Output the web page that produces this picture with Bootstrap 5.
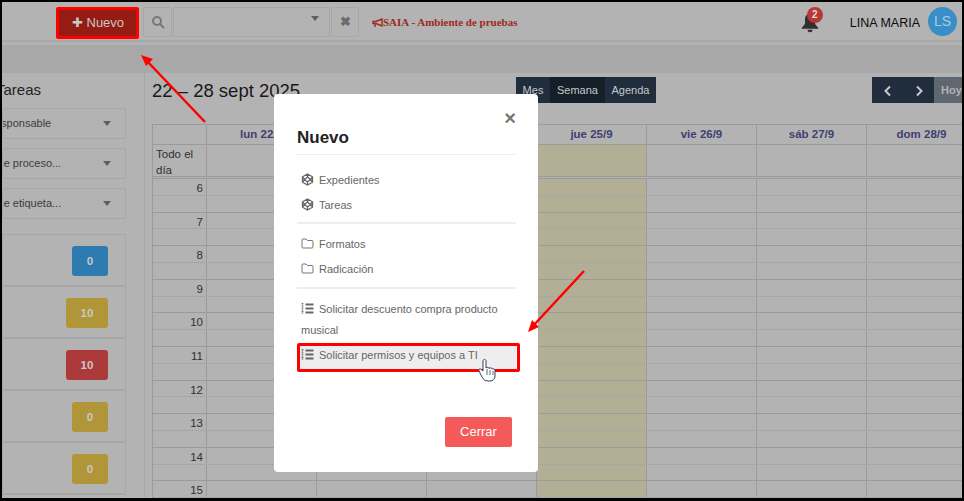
<!DOCTYPE html>
<html lang="es">
<head>
<meta charset="UTF-8">
<meta name="viewport" content="width=device-width, initial-scale=1.0">
<title>SAIA - Calendario</title>
<link href="https://cdn.jsdelivr.net/npm/bootstrap@5.3.0/dist/css/bootstrap.min.css" rel="stylesheet">
<style>
/* colores ya oscurecidos: la pagina esta detras del fondo del modal */
html, body { height: 100%; overflow: hidden; }
body { font-family: "Liberation Sans", Arial, sans-serif; font-size: 12px; color: #242424; border: solid #000; border-width: 2px 2px 3px 2px; background: #b3b3b3; }
.page { height: 100%; overflow: hidden; }

.topbar { height: 40px; margin-bottom: 3px; border-bottom: 2px solid #a8a8a8; padding-left: 56px; }
.btn-nuevo { width: 80px; height: 27px; margin-top: 7px; padding: 0; background: #941c12; color: #c8c8c8; border: 0; border-radius: 2px; font-size: 13px; }
.search-box { margin: 5px 0 0 5px; height: 30px; }
.search-cell { height: 30px; border: 1px solid #a7a7a7; border-radius: 2px; color: #6b6b6b; margin-right: 1px; }
.cell-a { width: 29px; }
.cell-b { width: 157px; padding-right: 10px; }
.cell-c { width: 28px; font-weight: 700; font-size: 13px; }
.caret-down { width: 0; height: 0; border-left: 4px solid transparent; border-right: 4px solid transparent; border-top: 5px solid #5f5f5f; }
.saia-text { margin: 0 0 0 12px; padding-top: 12px; font-family: "Liberation Serif", serif; font-weight: 700; font-size: 11px; color: #9d2a1f; }
.bell-box { width: 20px; height: 20px; margin: 11px 30px 0 0; }
.bell-num { top: -6px; right: -3px; width: 16px; height: 16px; border-radius: 50%; background: #b83636; color: #ddd; font-size: 10px; font-weight: 700; line-height: 16px; text-align: center; }
.user-name { font-size: 12.5px; color: #0c0c0c; padding-top: 12px; margin-right: 8px; }
.user-pic { width: 29px; height: 29px; margin: 5px 5px 0 0; border-radius: 50%; background: #3a8ec8; color: #a8cbe0; font-size: 14px; line-height: 29px; text-align: center; }
.subbar { height: 28px; background: #a8a8a8; }

.side-col { width: 143px; height: 430px; border-right: 1px solid #a7a7a7; overflow: hidden; flex-shrink: 0; }
.side-title { font-size: 15px; margin: 7px 0 9px -6px; line-height: 19px; white-space: nowrap; }
.sel-row { width: 124px; height: 31px; margin-bottom: 9px; border: 1px solid #a7a7a7; border-radius: 2px; padding: 0 14px 0 0; overflow: hidden; }
.sel-text { white-space: nowrap; font-size: 11px; color: #3c3c3c; }
.shift-a { margin-left: -16px; }
.shift-b { margin-left: -47px; }
.task-box { width: 124px; margin-top: 15px; border: 1px solid #a7a7a7; border-bottom: 0; }
.task-row { height: 52px; border-bottom: 2px solid #a7a7a7; padding: 11px 17px 0 0; }
.count-tag { height: 30px; border-radius: 3px; color: #c8c8c8; font-size: 11.5px; font-weight: 700; line-height: 30px; text-align: center; }
.tag-s { width: 36px; }
.tag-l { width: 42px; }
.tag-blue { background: #2e7bb2; }
.tag-yellow { background: #b09638; }
.tag-red { background: #ad3a3a; }

.cal-col { padding-left: 7px; min-width: 0; }
.cal-bar { height: 51px; padding-top: 4px; }
.cal-title { width: 364px; margin: 0; font-size: 18.5px; font-weight: 400; line-height: 28px; color: #181818; flex-shrink: 0; white-space: nowrap; }
.view-btn { height: 26px; padding: 0; border: 0; background: #1f2d3d; color: #c8c8c8; font-size: 11px; }
.view-btn.on { background: #141f2a; }
.v-mes { width: 34px; }
.v-sem { width: 55px; }
.v-age { width: 51px; }
.pager { margin-left: 216px; flex-shrink: 0; }
.pager .view-btn { width: 31px; }
.pager .view-btn.hoy { width: 40px; padding-left: 7px; background: #5f6770; color: #b3b3b3; font-weight: 700; text-align: left; }
.cal-grid { width: 825px; border: 1px solid #9b9b9b; border-right: 0; }
.g-row { display: flex; }
.g-cell { width: 110px; flex-shrink: 0; border-right: 1px solid #9b9b9b; }
.g-time { width: 54px; flex-shrink: 0; border-right: 1px solid #9b9b9b; text-align: right; padding-right: 3px; color: #303030; font-size: 11.5px; line-height: 18px; }
.g-head { height: 20px; border-bottom: 1px solid #9b9b9b; }
.g-head .g-cell { text-align: center; font-size: 11.5px; font-weight: 700; color: #403f6f; line-height: 19px; }
.g-all { height: 34px; border-bottom: 3px double #9b9b9b; }
.g-all .g-time { text-align: left; padding: 1px 0 0 3px; line-height: 16px; }
.g-slot { height: 16.8px; border-bottom: 1px dotted #9b9b9b; box-sizing: border-box; }
.g-slot.even { border-bottom: 1px solid #9b9b9b; }
.g-today { background: #b3ae96; }

.modal-dialog.nuevo-box { position: absolute; left: 274px; top: 94px; z-index: 1055; width: 264px; max-width: 264px; margin: 0; }
.nuevo-box .modal-content { background: #fff; border: 0; border-radius: 4px; padding: 0 22px 25px 23px; }
.nuevo-head { padding: 33px 0 5px; border-bottom: 1px solid #eee; }
.nuevo-head .modal-title { font-size: 17px; font-weight: 700; line-height: 22px; color: #222; }
.close-x { top: 12px; right: 20px; width: 16px; height: 24px; padding: 0; border: 0; background: none; color: #777; font-size: 20px; font-weight: 700; line-height: 24px; }
.nuevo-list { margin-top: 13px; }
.opt-item { display: block; padding: 0 4px; height: 25px; line-height: 25px; color: #666; font-size: 11px; text-decoration: none; }
.opt-item svg { width: 13px; height: 13px; margin-right: 5px; vertical-align: -2px; }
.opt-wrap { height: auto; line-height: 21px; padding-top: 10px; }
.opt-on { background: #eee; height: 28px; line-height: 22px; margin-top: 3px; }
.nuevo-rule { height: 2px; margin: 4px 0 8px; background: #eee; border: 0; opacity: 1; }
.rule-low { margin: 5px 0 0; }
.btn-cerrar { width: 67px; height: 30px; padding: 0; margin: 45px 4px 0 auto; display: block; background: #f55a5a; border: 0; border-radius: 2px; color: #fff; font-size: 13px; }

.anno { z-index: 1060; pointer-events: none; }
.anno-box { border: 3px solid #f00; border-radius: 2px; }
.anno-nuevo { left: 56px; top: 7px; width: 83px; height: 32px; }
.anno-item { left: 297px; top: 343px; width: 223px; height: 29px; }
.anno-svg { left: 0; top: 0; width: 964px; height: 501px; }
</style>
</head>
<body>
<div class="page">
    <div class="topbar d-flex">
        <button class="btn-nuevo">✚ Nuevo</button>
        <div class="search-box d-flex">
            <div class="search-cell cell-a d-flex align-items-center justify-content-center">
                <svg width="14" height="14" viewBox="0 0 14 14" fill="none" stroke="#777" stroke-width="2"><circle cx="6" cy="6" r="4"/><path d="M9 9l4 4"/></svg>
            </div>
            <div class="search-cell cell-b d-flex justify-content-end"><span class="caret-down mt-2"></span></div>
            <div class="search-cell cell-c d-flex align-items-center justify-content-center">✖</div>
        </div>
        <p class="saia-text">
            <svg width="11" height="10" viewBox="0 0 11 10" fill="none" stroke="#9d2a1f" stroke-width="1.4"><path d="M1 3.500h3L10 1v7L4 5.500H1zM3 6v3"/></svg>SAIA - Ambiente de pruebas
        </p>
        <div class="ms-auto d-flex">
            <div class="bell-box position-relative">
                <svg width="20" height="20" viewBox="0 0 22 24" fill="#303030"><path d="M11 1c-4 0-6 3-6 7v4c0 2-2 3-4 6v1h20v-1c-2-3-4-4-4-6V8c0-4-2-7-6-7z"/><path d="M8 20a3 3 0 0 0 6 0z"/></svg>
                <span class="bell-num position-absolute">2</span>
            </div>
            <div class="user-name">LINA MARIA</div>
            <div class="user-pic">LS</div>
        </div>
    </div>
    <div class="subbar"></div>
    <div class="d-flex">
        <div class="side-col">
            <div class="side-title">Tareas</div>
            <div class="sel-row d-flex align-items-center justify-content-between"><span class="sel-text shift-a">Responsable</span><span class="caret-down"></span></div>
            <div class="sel-row d-flex align-items-center justify-content-between"><span class="sel-text shift-b">Seleccione proceso...</span><span class="caret-down"></span></div>
            <div class="sel-row d-flex align-items-center justify-content-between"><span class="sel-text shift-b">Seleccione etiqueta...</span><span class="caret-down"></span></div>
            <div class="task-box">
                <div class="task-row d-flex justify-content-end"><div class="count-tag tag-s tag-blue">0</div></div>
                <div class="task-row d-flex justify-content-end"><div class="count-tag tag-l tag-yellow">10</div></div>
                <div class="task-row d-flex justify-content-end"><div class="count-tag tag-l tag-red">10</div></div>
                <div class="task-row d-flex justify-content-end"><div class="count-tag tag-s tag-yellow">0</div></div>
                <div class="task-row d-flex justify-content-end"><div class="count-tag tag-s tag-yellow">0</div></div>
            </div>
        </div>
        <div class="cal-col flex-grow-1">
            <div class="cal-bar d-flex">
                <h2 class="cal-title">22 – 28 sept 2025</h2>
                <div class="btn-group flex-shrink-0 align-self-start">
                    <button class="view-btn v-mes">Mes</button>
                    <button class="view-btn v-sem on">Semana</button>
                    <button class="view-btn v-age">Agenda</button>
                </div>
                <div class="btn-group pager align-self-start">
                    <button class="view-btn"><svg width="10" height="12" viewBox="0 0 10 12" fill="none" stroke="#c8c8c8" stroke-width="2"><path d="M7 1.500L2.500 6 7 10.500"/></svg></button>
                    <button class="view-btn"><svg width="10" height="12" viewBox="0 0 10 12" fill="none" stroke="#c8c8c8" stroke-width="2"><path d="M3 1.500L7.500 6 3 10.500"/></svg></button>
                    <button class="view-btn hoy">Hoy</button>
                </div>
            </div>
            <div class="cal-grid" id="calGrid">
                <div class="g-row g-head">
                    <div class="g-time"></div>
                    <div class="g-cell">lun 22/9</div>
                    <div class="g-cell">mar 23/9</div>
                    <div class="g-cell">mié 24/9</div>
                    <div class="g-cell">jue 25/9</div>
                    <div class="g-cell">vie 26/9</div>
                    <div class="g-cell">sáb 27/9</div>
                    <div class="g-cell">dom 28/9</div>
                </div>
                <div class="g-row g-all">
                    <div class="g-time">Todo el día</div>
                    <div class="g-cell"></div><div class="g-cell"></div><div class="g-cell"></div>
                    <div class="g-cell g-today"></div>
                    <div class="g-cell"></div><div class="g-cell"></div><div class="g-cell"></div>
                </div>
            </div>
        </div>
    </div>
</div>

<div class="modal-dialog nuevo-box">
    <div class="modal-content position-relative">
        <button class="close-x position-absolute">×</button>
        <div class="nuevo-head"><h5 class="modal-title">Nuevo</h5></div>
        <div class="nuevo-list">
            <a class="opt-item" href="#"><svg viewBox="0 0 13 13" fill="none" stroke="#666" stroke-width="1.300"><path d="M6.500 1L11.500 3.800v5.400L6.500 12l-5-2.800V3.800zM6.500 4L9.500 6.500 6.500 9 3.500 6.500zM1.500 3.800L3.500 6.500 1.500 9.200M11.500 3.800L9.500 6.500 11.500 9.200M6.500 1v3M6.500 9v3"/></svg>Expedientes</a>
            <a class="opt-item" href="#"><svg viewBox="0 0 13 13" fill="none" stroke="#666" stroke-width="1.300"><path d="M6.500 1L11.500 3.800v5.400L6.500 12l-5-2.800V3.800zM6.500 4L9.500 6.500 6.500 9 3.500 6.500zM1.500 3.800L3.500 6.500 1.500 9.200M11.500 3.800L9.500 6.500 11.500 9.200M6.500 1v3M6.500 9v3"/></svg>Tareas</a>
            <hr class="nuevo-rule">
            <a class="opt-item" href="#"><svg viewBox="0 0 13 13" fill="none" stroke="#777" stroke-width="1"><path d="M1 3a1 1 0 0 1 1-1h3l1.500 1.500H11a1 1 0 0 1 1 1V10a1 1 0 0 1-1 1H2a1 1 0 0 1-1-1z"/></svg>Formatos</a>
            <a class="opt-item" href="#"><svg viewBox="0 0 13 13" fill="none" stroke="#777" stroke-width="1"><path d="M1 3a1 1 0 0 1 1-1h3l1.500 1.500H11a1 1 0 0 1 1 1V10a1 1 0 0 1-1 1H2a1 1 0 0 1-1-1z"/></svg>Radicación</a>
            <hr class="nuevo-rule rule-low">
            <a class="opt-item opt-wrap" href="#"><svg viewBox="0 0 13 13" fill="none" stroke="#666"><path stroke-width="1.800" d="M4.500 2.500H12.500M4.500 6.500H12.500M4.500 10.500H12.500"/><path stroke-width="1.600" stroke-dasharray="1 .6" d="M1.500 1V12"/></svg>Solicitar descuento compra producto musical</a>
            <a class="opt-item opt-on" href="#"><svg viewBox="0 0 13 13" fill="none" stroke="#666"><path stroke-width="1.800" d="M4.500 2.500H12.500M4.500 6.500H12.500M4.500 10.500H12.500"/><path stroke-width="1.600" stroke-dasharray="1 .6" d="M1.500 1V12"/></svg>Solicitar permisos y equipos a TI</a>
        </div>
        <button class="btn-cerrar">Cerrar</button>
    </div>
</div>

<div class="anno anno-box anno-nuevo position-absolute"></div>
<div class="anno anno-box anno-item position-absolute"></div>
<svg class="anno anno-svg position-absolute" viewBox="0 0 964 501">
    <path d="M205 122L147 61" stroke="#f00" stroke-width="2.500" fill="none"/>
    <path d="M141 55l12 4-7 7z" fill="#f00"/>
    <path d="M584 271L533 326" stroke="#f00" stroke-width="2.500" fill="none"/>
    <path d="M528 332l4-12 7 7z" fill="#f00"/>
    <path d="M483 361c0-2 3-2 3 0v7c1-1 3-1 3 .5 1-1 3-1 3 .5 1-.5 3 0 3 1v6c0 3-2 5-5 5h-2c-3 0-5-2-6-4l-3-6c-1-2 1-3 3-1l1 1z" fill="#fff" stroke="#3a3f55" stroke-width="1"/>
    <path d="M487 369v6M490 370v5M493 371v4" stroke="#3a3f55" stroke-width=".8"/>
</svg>

<script>
    // filas de media hora de la vista semanal
    const calGrid = document.getElementById("calGrid");
    for (let i = 0; i < 20; i++) {
        const row = document.createElement("div");
        row.className = "g-row g-slot" + (i % 2 ? " even" : "");
        let cells = `<div class="g-time">${i % 2 ? "" : 6 + i / 2}</div>`;
        for (let d = 0; d < 7; d++) {
            cells += `<div class="g-cell${d === 3 ? " g-today" : ""}"></div>`;
        }
        row.innerHTML = cells;
        calGrid.appendChild(row);
    }
</script>
<script src="https://cdn.jsdelivr.net/npm/bootstrap@5.3.0/dist/js/bootstrap.bundle.min.js"></script>
</body>
</html>
